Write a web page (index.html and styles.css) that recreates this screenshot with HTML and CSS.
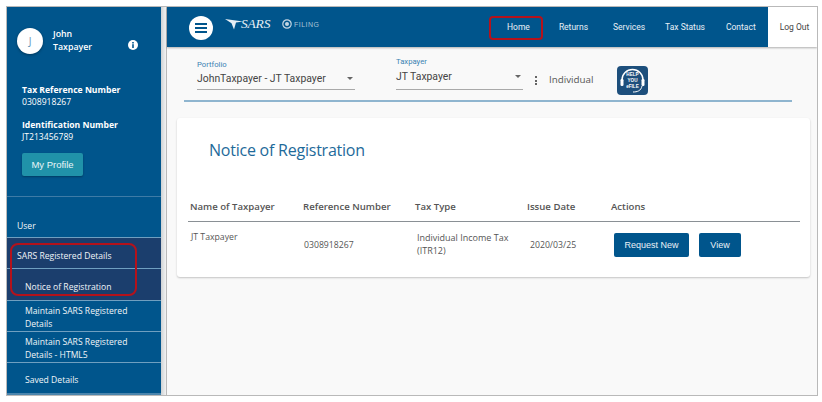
FILE: index.html
```html
<!DOCTYPE html>
<html lang="en">
<head>
<meta charset="utf-8">
<title>Notice of Registration</title>
<link rel="stylesheet" href="styles.css">
</head>
<body>
<div class="frame">
  <aside class="sidebar">
    <div class="profile">
      <div class="user-row">
        <div class="avatar">J</div>
        <div class="user-name">John<br>Taxpayer</div>
        <svg class="info" viewBox="0 0 10 10" width="10" height="10"><circle cx="5" cy="5" r="5" fill="#fff"/><rect x="4.2" y="4.2" width="1.6" height="3.8" fill="#00558c"/><rect x="4.2" y="2" width="1.6" height="1.5" fill="#00558c"/></svg>
      </div>
      <div class="id-block">
        <div class="id-label">Tax Reference Number</div>
        <div class="id-value">0308918267</div>
      </div>
      <div class="id-block second">
        <div class="id-label">Identification Number</div>
        <div class="id-value">JT213456789</div>
      </div>
      <button class="profile-btn">My Profile</button>
    </div>
    <nav class="menu">
      <div class="menu-item top user-item">User</div>
      <div class="menu-item top active parent">SARS Registered Details</div>
      <div class="menu-item sub active single">Notice of Registration</div>
      <div class="menu-item sub double">Maintain SARS Registered Details</div>
      <div class="menu-item sub double">Maintain SARS Registered Details - HTML5</div>
      <div class="menu-item sub last">Saved Details</div>
    </nav>
    <div class="callout callout-menu"></div>
  </aside>
  <div class="gutter"></div>
  <main class="main">
    <header class="topbar">
      <div class="burger"><span></span><span></span><span></span></div>
      <div class="logo">
        <svg class="swoosh" viewBox="0 0 18 11" width="18" height="11"><path d="M0 0 L18 2.5 L11 3.6 L9 10.5 L6.5 4.2 Z" fill="#e6eef4"/></svg>
        <span class="sars">SARS</span>
        <svg class="e-mark" viewBox="0 0 10 10" width="10" height="10"><circle cx="5" cy="5" r="4.2" fill="none" stroke="#c5d6e3" stroke-width="1.2"/><circle cx="5" cy="5" r="2" fill="#c5d6e3"/></svg>
        <span class="filing">FILING</span>
      </div>
      <ul class="nav">
        <li class="nav-home">Home</li>
        <li class="nav-returns">Returns</li>
        <li class="nav-services">Services</li>
        <li class="nav-status">Tax Status</li>
        <li class="nav-contact">Contact</li>
      </ul>
      <div class="logout">Log Out</div>
      <div class="callout callout-home"></div>
    </header>
    <section class="filters">
      <div class="field portfolio">
        <label>Portfolio</label>
        <div class="select"><span>JohnTaxpayer - JT Taxpayer</span><i class="caret"></i></div>
      </div>
      <div class="field taxpayer">
        <label>Taxpayer</label>
        <div class="select"><span>JT Taxpayer</span><i class="caret"></i></div>
      </div>
      <div class="dots"><span></span><span></span><span></span></div>
      <div class="individual">Individual</div>
      <svg class="help" viewBox="0 0 31 29" width="31" height="29">
        <rect x="0" y="0" width="31" height="29" rx="4" fill="#1d4f7c"/>
        <path d="M5 17 V14 A10.5 10.5 0 0 1 26 14 V17" fill="none" stroke="#fff" stroke-width="1.4"/>
        <rect x="3.5" y="13" width="3" height="7" rx="1.2" fill="#fff"/>
        <rect x="24.5" y="13" width="3" height="7" rx="1.2" fill="#fff"/>
        <path d="M25 20 C24 25 20 26 16 26" fill="none" stroke="#fff" stroke-width="1"/>
        <text x="15.5" y="10" class="help-text">HELP</text>
        <text x="15.5" y="16" class="help-text">YOU</text>
        <text x="15.5" y="22" class="help-text">eFILE</text>
      </svg>
    </section>
    <div class="filter-rule"></div>
    <section class="card">
      <h1>Notice of Registration</h1>
      <div class="table">
        <div class="th">Name of Taxpayer</div>
        <div class="th">Reference Number</div>
        <div class="th">Tax Type</div>
        <div class="th">Issue Date</div>
        <div class="th">Actions</div>
        <div class="td name">JT Taxpayer</div>
        <div class="td ref">0308918267</div>
        <div class="td type">Individual Income Tax (ITR12)</div>
        <div class="td date">2020/03/25</div>
        <div class="td actions"><button class="btn request">Request New</button><button class="btn view">View</button></div>
      </div>
    </section>
  </main>
</div>
</body>
</html>
```
FILE: styles.css
```css
* { box-sizing: border-box; }
html, body { margin: 0; padding: 0; background: #fff; }
body {
  width: 822px;
  height: 402px;
  overflow: hidden;
  padding: 6px 4px 6px 6px;
  font-family: "Open Sans", "Liberation Sans", sans-serif;
}
.frame {
  width: 812px;
  height: 390px;
  border: 1px solid #b9b9b9;
  display: flex;
  overflow: hidden;
  position: relative;
}
.sidebar {
  width: 154px;
  flex: none;
  background: #00558c;
  color: #fff;
  display: flex;
  flex-direction: column;
  position: relative;
}
.gutter {
  width: 6px;
  flex: none;
  background: linear-gradient(to right, #cfd2d4 0, #e4e6e7 60%, #f3f3f3 100%);
  border-right: 1px solid #b9b9b9;
}
.profile {
  height: 190px;
  border-bottom: 1px solid #3e7ba6;
  padding: 20px 15px 0 10px;
  flex: none;
}
.user-row { display: flex; align-items: center; height: 27px; }
.avatar {
  width: 26px;
  height: 26px;
  border-radius: 50%;
  background: #fff;
  color: #5e93b8;
  font-size: 10px;
  display: flex;
  align-items: center;
  justify-content: center;
  flex: none;
  box-shadow: 0 1px 3px rgba(0,0,0,.35);
}
.user-name {
  margin-left: 10px;
  font-size: 8.8px;
  font-weight: 600;
  line-height: 13px;
  width: 75px;
  flex: none;
}
.info { margin-top: 9px; flex: none; }
.id-block { margin: 30px 0 0 5px; }
.id-block.second { margin-top: 11px; }
.id-label { font-size: 8.6px; font-weight: 700; line-height: 12px; white-space: nowrap; }
.id-value { font-size: 8.6px; line-height: 12px; }
.profile-btn {
  display: block;
  margin: 10px 0 0 5px;
  width: 61px;
  height: 23px;
  border: 0;
  border-radius: 2px;
  background: #2092a9;
  color: #e9f5f8;
  font: 400 9.5px "Liberation Sans", sans-serif;
  padding: 0;
  box-shadow: 0 1px 2px rgba(0,0,0,.3);
}
.menu { display: flex; flex-direction: column; }
.menu-item {
  font-size: 8.6px;
  line-height: 13px;
  color: #f1f5f8;
  border-bottom: 1px solid #6f9fc0;
  display: flex;
  align-items: center;
}
.menu-item.top { padding-left: 10px; }
.menu-item.sub { padding-left: 18px; padding-right: 10px; }
.user-item { height: 41px; padding-top: 19px; }
.parent { height: 31px; padding-top: 6px; }
.single { height: 32px; padding-top: 6px; }
.double { height: 31px; line-height: 12.5px; padding-top: 3px; }
.last { height: 30px; border-bottom: 0; padding-top: 4px; }
.menu-item.active { background: #1b3e6d; }
.menu::after { content: ""; display: block; height: 3px; background: #4b85ad; }
.callout {
  position: absolute;
  border: 2px solid #b5121b;
}
.callout-menu { left: 3px; top: 236px; width: 127px; height: 53px; border-radius: 8px; }
.callout-home { left: 322px; top: 9px; width: 54px; height: 24px; border-radius: 4px; }
.main {
  flex: 1;
  min-width: 0;
  background: #f9f9f9;
  display: flex;
  flex-direction: column;
  align-items: stretch;
}
.topbar {
  height: 40px;
  background: #00558c;
  display: flex;
  align-items: center;
  flex: none;
  position: relative;
  box-shadow: 0 1px 2px rgba(0,0,0,.3);
  padding-left: 22px;
}
.burger {
  width: 24px;
  height: 24px;
  border-radius: 50%;
  background: #fff;
  display: flex;
  flex-direction: column;
  align-items: center;
  justify-content: center;
  gap: 2px;
  margin-top: 2px;
  flex: none;
}
.burger span { width: 12px; height: 2px; background: #00558c; display: block; }
.logo {
  display: flex;
  align-items: center;
  margin: -6px 0 0 12px;
  color: #e6eef4;
  width: 282px;
  flex: none;
}
.swoosh { flex: none; }
.sars { font: italic 400 13.5px "Liberation Serif", serif; letter-spacing: -.2px; margin-left: -2px; width: 33px; flex: none; }
.e-mark { margin-left: 8px; flex: none; }
.filing { font: 7px "Liberation Sans", sans-serif; color: #a9c2d6; margin-left: 2px; letter-spacing: .5px; }
.nav {
  list-style: none;
  margin: 0;
  padding: 0;
  display: flex;
  font: 8.5px Roboto, "Liberation Sans", sans-serif;
  color: #e8f0f6;
  flex: none;
  width: 254px;
}
.nav li { white-space: nowrap; }
.nav-returns { margin-left: 29px; }
.nav-services { margin-left: 25px; }
.nav-status { margin-left: 20px; }
.nav-contact { margin-left: 21px; }
.logout {
  width: 49px;
  height: 40px;
  background: #fff;
  color: #444;
  font: 8.5px Roboto, "Liberation Sans", sans-serif;
  display: flex;
  align-items: center;
  justify-content: center;
  padding-left: 4px;
  flex: none;
  margin-left: auto;
}
.filters {
  height: 53px;
  flex: none;
  display: flex;
  align-items: flex-start;
  padding-left: 30px;
  position: relative;
}
.field label {
  display: block;
  font: 7.7px Roboto, "Liberation Sans", sans-serif;
  color: #3b83b3;
  line-height: 10px;
}
.select {
  display: flex;
  align-items: center;
  justify-content: space-between;
  font: 10.4px Roboto, "Liberation Sans", sans-serif;
  color: #444;
  border-bottom: 1px solid #a9a9a9;
  padding-right: 1px;
}
.portfolio { width: 158px; margin-top: 13px; }
.portfolio .select { height: 20px; padding-bottom: 2px; }
.taxpayer { width: 127px; margin: 10px 0 0 41px; }
.taxpayer .select { height: 23px; padding-bottom: 4px; }
.caret {
  width: 0;
  height: 0;
  border-left: 3.5px solid transparent;
  border-right: 3.5px solid transparent;
  border-top: 3.5px solid #666;
  margin-right: 1px;
}
.dots {
  width: 3px;
  margin: 29px 0 0 12px;
  display: flex;
  flex-direction: column;
  gap: 1.5px;
  flex: none;
}
.dots span { width: 2px; height: 2px; border-radius: 50%; background: #333; display: block; }
.individual {
  margin: 26px 0 0 11px;
  font: 9.8px "Open Sans", sans-serif;
  color: #555;
  line-height: 14px;
  width: 67px;
  flex: none;
}
.help { margin: 19px 0 0 1px; flex: none; }
.help-text { font: 700 4.6px "Liberation Sans", sans-serif; fill: #fff; text-anchor: middle; }
.filter-rule {
  height: 1.5px;
  background: #8fb5cf;
  margin: 0 25px 0 17px;
  flex: none;
}
.card {
  margin: 16px 7px 0 10px;
  height: 159px;
  background: #fff;
  border-radius: 3px;
  box-shadow: 0 1px 2px rgba(0,0,0,.22);
  padding: 0 10px 0 11px;
  flex: none;
}
.card h1 {
  margin: 0;
  padding: 21px 0 0 21px;
  font-size: 16px;
  letter-spacing: -.23px;
  line-height: 22px;
  font-weight: 400;
  color: #1e6a9a;
}
.table {
  display: grid;
  grid-template-columns: 112px 112px 112px 84px 1fr;
  margin-top: 36px;
}
.th {
  font-size: 9.6px;
  font-weight: 600;
  color: #555;
  height: 25px;
  line-height: 20px;
  padding-left: 3px;
  border-bottom: 1.5px solid #8a9095;
  white-space: nowrap;
}
.th:first-child { padding-left: 2px; }
.td { font-size: 8.7px; color: #555; line-height: 13px; padding-left: 4px; }
.name { padding-top: 9px; padding-left: 3px; }
.ref { padding-top: 17px; padding-left: 4px; }
.type { font-size: 9px; padding-top: 9px; padding-left: 5px; width: 105px; }
.date { padding-top: 17px; padding-left: 6px; }
.actions { padding: 11px 0 0 6px; display: flex; gap: 10px; align-items: flex-start; }
.btn {
  height: 24px;
  border: 0;
  border-radius: 2px;
  background: #00558c;
  color: #eaf2f7;
  font: 9px "Liberation Sans", sans-serif;
  padding: 0;
}
.request { width: 75px; }
.view { width: 42px; }
```
